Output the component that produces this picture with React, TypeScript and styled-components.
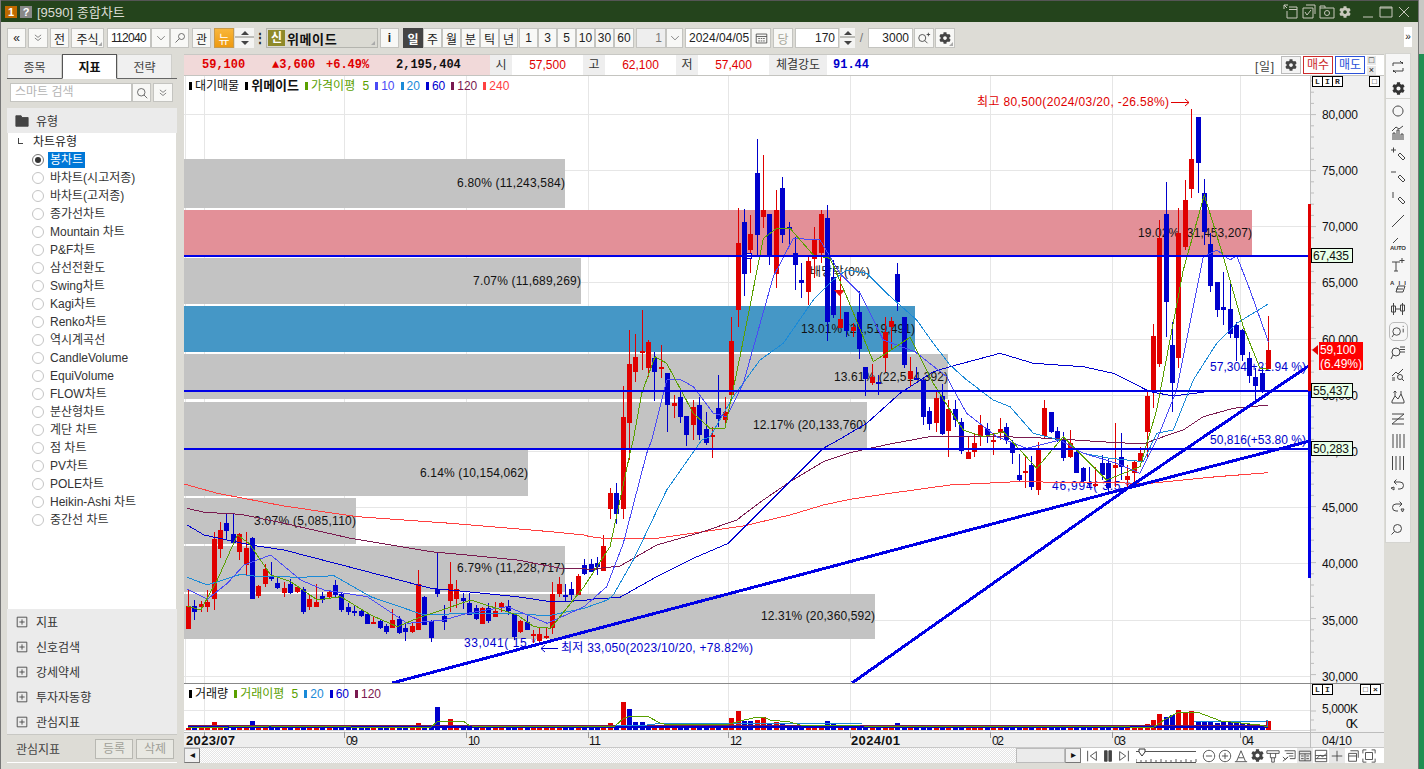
import * as React from 'react';
import styled, { createGlobalStyle } from 'styled-components';
import { FaCog } from 'react-icons/fa';

const KR = `"Liberation Sans", "Noto Sans CJK KR", sans-serif`;
const MONO = `"Liberation Mono", "Noto Sans CJK KR", monospace`;
const RED = '#e00000';
const BLUE = '#0000cc';

type Row = [number, number, number, number, number];

// candles read from the picture at 3x: up, wick top, body top, body bottom, wick bottom
const blockA: Row[] = [
	[1, 330, 378, 447, 447], [0, 360, 378, 395, 420], [1, 362, 373, 382, 395], [1, 330, 365, 382, 395],
	[1, 155, 178, 357, 390], [1, 125, 150, 207, 235], [0, 102, 130, 152, 178], [0, 103, 162, 190, 195],
	[1, 160, 162, 215, 240], [1, 155, 205, 255, 285], [0, 172, 175, 357, 357], [1, 315, 318, 347, 355],
	[1, 252, 267, 313, 322], [0, 247, 288, 296, 303], [0, 288, 310, 323, 328], [1, 305, 325, 340, 350],
	[0, 298, 312, 340, 343], [1, 318, 322, 337, 340], [0, 322, 328, 395, 402], [1, 343, 358, 382, 390],
	[1, 312, 366, 381, 382], [0, 335, 348, 360, 368], [1, 333, 335, 352, 358], [0, 300, 316, 345, 352],
	[0, 338, 343, 390, 395], [0, 370, 381, 397, 405], [0, 375, 393, 399, 408], [0, 390, 393, 408, 412],
	[0, 395, 403, 431, 433], [1, 410, 426, 430, 433], [0, 420, 423, 443, 447], [0, 432, 438, 456, 462],
	[1, 388, 420, 443, 445], [0, 408, 418, 458, 462], [0, 430, 443, 456, 482], [1, 430, 437, 456, 458],
	[1, 270, 313, 450, 450], [0, 348, 351, 435, 435], [0, 420, 423, 473, 485], [0, 215, 328, 342, 352],
	[0, 375, 407, 425, 450], [1, 247, 312, 363, 395], [1, 300, 327, 358, 385], [0, 338, 355, 362, 388],
	[0, 338, 368, 405, 405], [0, 375, 383, 417, 420], [1, 380, 385, 431, 432], [0, 368, 383, 423, 430],
	[1, 365, 393, 410, 410], [1, 365, 370, 380, 395], [0, 360, 378, 392, 405], [0, 400, 402, 472, 480],
	[1, 420, 423, 455, 460], [0, 402, 425, 450, 450], [1, 450, 462, 466, 490], [1, 445, 462, 482, 490],
	[1, 445, 468, 475, 478], [1, 305, 342, 445, 462], [1, 292, 312, 342, 350], [0, 312, 345, 350, 362],
	[0, 307, 327, 345, 360], [1, 282, 288, 344, 345], [0, 237, 255, 282, 285], [0, 237, 252, 275, 275],
	[0, 230, 250, 260, 285], [1, 165, 197, 272, 272], [1, 25, 38, 87, 117], [0, 10, 38, 103, 132],
];

const blockB: Row[] = [
	[1, 768, 860, 1137, 1167], [1, 600, 702, 878, 990], [1, 612, 682, 725, 755], [1, 540, 663, 665, 720],
	[1, 630, 636, 715, 740], [0, 665, 685, 725, 812], [1, 645, 711, 713, 745], [0, 728, 728, 825, 905],
	[1, 795, 818, 828, 865], [0, 780, 800, 860, 878], [0, 860, 858, 914, 948], [1, 810, 831, 885, 930],
	[0, 800, 825, 915, 930], [0, 845, 897, 940, 945], [1, 890, 915, 917, 985], [0, 735, 833, 867, 890],
	[1, 800, 845, 870, 880], [1, 560, 632, 795, 800], [1, 235, 338, 540, 590], [0, 237, 276, 432, 497],
	[1, 255, 312, 360, 430], [0, 27, 128, 315, 375], [1, 75, 240, 262, 295], [0, 252, 252, 378, 405],
	[1, 180, 240, 432, 475], [0, 140, 173, 315, 340], [0, 275, 292, 295, 345], [0, 320, 368, 405, 480],
	[0, 400, 450, 458, 505], [1, 378, 393, 487, 525], [1, 292, 330, 387, 445], [1, 240, 252, 368, 400],
	[0, 225, 263, 577, 633], [0, 390, 442, 556, 565], [1, 440, 567, 593, 595], [0, 545, 545, 603, 620],
	[1, 578, 590, 603, 620], [0, 482, 545, 657, 687], [0, 710, 710, 747, 797], [1, 702, 741, 758, 765],
	[0, 735, 755, 760, 795], [1, 560, 605, 684, 725], [1, 560, 573, 590, 660], [0, 400, 432, 515, 543],
	[0, 560, 560, 705, 715], [1, 680, 722, 747, 770], [0, 710, 744, 748, 750], [0, 745, 750, 860, 885],
	[0, 830, 843, 882, 900], [1, 785, 805, 878, 905], [0, 762, 798, 912, 915], [1, 810, 838, 903, 980],
	[0, 810, 838, 870, 890],
];

const blockC: Row[] = [
	[0, 985, 995, 1082, 1093], [1, 1040, 1087, 1107, 1107], [1, 1030, 1060, 1085, 1100], [1, 975, 1005, 1040, 1068],
	[0, 1000, 1018, 1035, 1060], [1, 1030, 1050, 1055, 1095], [1, 985, 1018, 1028, 1050], [0, 1000, 1012, 1050, 1062],
	[0, 1050, 1058, 1090, 1122], [0, 1092, 1155, 1170, 1175], [1, 1100, 1143, 1148, 1195], [0, 1097, 1125, 1190, 1200],
	[1, 1055, 1080, 1200, 1215], [1, 930, 953, 1037, 1048], [0, 965, 967, 1027, 1030], [0, 1010, 1022, 1050, 1055],
	[0, 1025, 1050, 1103, 1112], [1, 1020, 1060, 1102, 1105], [0, 1075, 1085, 1150, 1150], [0, 1130, 1133, 1172, 1180],
	[0, 1130, 1175, 1182, 1190], [1, 1130, 1182, 1186, 1190], [0, 1095, 1120, 1155, 1170], [0, 1105, 1120, 1195, 1205],
	[1, 1000, 1125, 1133, 1190], [0, 1030, 1102, 1130, 1170], [1, 1125, 1158, 1170, 1190], [1, 1110, 1115, 1148, 1180],
	[1, 1070, 1090, 1115, 1115], [1, 900, 918, 1025, 1100], [1, 702, 738, 905, 955], [1, 390, 443, 822, 830],
	[0, 275, 372, 635, 740], [0, 695, 765, 878, 965], [1, 355, 430, 803, 835], [1, 270, 330, 470, 480],
	[1, 57, 207, 297, 325], [0, 80, 82, 220, 310], [0, 268, 310, 425, 465], [0, 430, 463, 587, 605],
	[0, 575, 576, 660, 680], [0, 545, 651, 659, 705], [0, 573, 657, 732, 745], [0, 695, 705, 743, 812],
	[0, 718, 720, 795, 812], [0, 785, 805, 857, 880], [0, 835, 860, 887, 930], [0, 830, 850, 905, 910],
	[1, 678, 780, 838, 838],
];

const fromZoom = (oy: number, rows: Row[]) =>
	rows.map(([up, wt, bt, bb, wb]) => ({
		up: up === 1,
		wt: Math.round(oy + wt / 3),
		bt: Math.round(oy + bt / 3),
		bb: Math.round(oy + bb / 3),
		wb: Math.round(oy + wb / 3)
	}));

const candles = [...fromZoom(480, blockA), ...fromZoom(130, blockB), ...fromZoom(90, blockC)];
const candleX = (i: number) => Math.round(188 + i * 6.39);

type Pt = [number, number];
const zoomed = (ox: number, oy: number, p: Pt[]) => p.map(([x, y]) => `${(ox + x / 3).toFixed(1)},${(oy + y / 3).toFixed(1)}`).join(' ');
const Z7 = (p: Pt[]) => zoomed(184, 480, p);
const Z8 = (p: Pt[]) => zoomed(600, 130, p);
const Z9 = (p: Pt[]) => zoomed(950, 90, p);
const Z10 = (p: Pt[]) => zoomed(590, 440, p);

const lines = [
	{
		color: '#ff4040',
		points: [
			Z7([[0, 12], [100, 40], [300, 78], [520, 110], [800, 130], [1100, 155], [1200, 165]]),
			Z10([[0, 290], [50, 296], [200, 295], [340, 275], [460, 258], [600, 225], [700, 195], [780, 178], [900, 160]]),
			Z9([[0, 1185], [200, 1175], [600, 1180], [800, 1160], [955, 1148]])
		]
	},
	{
		color: '#7a1a50',
		points: [
			Z7([[10, 85], [60, 97], [170, 103], [300, 130], [500, 175], [740, 215], [850, 225], [1000, 240], [1130, 265], [1240, 268]]),
			Z10([[0, 388], [90, 378], [200, 315], [340, 275], [440, 240], [520, 180], [600, 125], [700, 65], [780, 38], [900, 12]]),
			Z8([[1000, 918]]),
			Z9([[0, 1038], [100, 1038], [300, 1045], [450, 1055], [580, 1062], [640, 1040], [700, 1020], [760, 980], [850, 955], [955, 945]])
		]
	},
	{
		color: '#0000d0',
		points: [
			Z7([[10, 135], [60, 165], [200, 195], [300, 210], [500, 262], [740, 325], [850, 335], [1000, 350], [1100, 365], [1200, 362]]),
			Z10([[0, 478], [90, 472], [200, 410], [310, 355], [415, 310], [480, 245], [600, 125], [700, 25], [745, 0]]),
			Z8([[800, 880], [900, 790], [1000, 725]]),
			Z9([[0, 830], [150, 790], [250, 820], [400, 830], [490, 850], [600, 905], [670, 918], [770, 905]])
		]
	},
	{
		color: '#1a8ad8',
		points: [
			Z7([[10, 292], [70, 315], [170, 283], [210, 288], [350, 292], [450, 287], [560, 350], [720, 405], [850, 400], [1000, 400], [1090, 408], [1200, 385], [1270, 360]]),
			Z10([[70, 465], [130, 360], [230, 150], [335, 0]]),
			Z8([[330, 920], [400, 800], [480, 690], [550, 640], [640, 510], [700, 450], [740, 420], [800, 430], [860, 490], [950, 570], [1000, 640]]),
			Z9([[0, 825], [50, 870], [130, 930], [180, 950], [250, 1030], [330, 1050], [400, 1090], [480, 1105], [580, 1115], [620, 1030], [670, 1020], [730, 870], [800, 760], [860, 700], [955, 642]])
		]
	},
	{
		color: '#4a4af5',
		points: [
			Z7([[10, 328], [70, 358], [130, 310], [180, 255], [260, 225], [350, 300], [420, 330], [550, 350], [670, 430], [780, 420], [850, 400], [970, 380], [1090, 430], [1200, 380]]),
			Z10([[50, 440], [100, 310], [170, 40], [185, 0]]),
			Z8([[200, 750], [240, 748], [280, 770], [340, 850], [380, 860], [430, 760], [520, 440], [580, 325], [660, 330], [720, 430], [780, 490], [850, 630], [945, 665], [1040, 740]]),
			Z9([[0, 880], [50, 970], [140, 1040], [230, 1075], [330, 1050], [400, 1090], [500, 1120], [570, 1150], [620, 1050], [680, 900], [760, 500], [800, 480], [840, 510], [860, 497], [900, 600], [955, 755]])
		]
	},
	{
		color: '#5aa000',
		points: [
			Z7([[10, 378], [50, 390], [100, 300], [160, 165], [195, 190], [260, 285], [320, 305], [400, 360], [470, 350], [560, 405], [640, 440], [700, 415], [760, 395], [860, 360], [1000, 405], [1050, 440], [1100, 445], [1200, 320]]),
			Z10([[60, 320], [120, 40], [130, 0]]),
			Z8([[125, 790], [165, 680], [200, 700], [280, 850], [330, 895], [375, 895], [420, 680], [490, 325], [530, 295], [570, 295], [640, 375], [690, 385], [740, 500], [820, 695], [930, 622], [1000, 760]]),
			Z9([[0, 960], [40, 1020], [100, 1040], [160, 1025], [260, 1135], [340, 1040], [400, 1100], [470, 1170], [570, 1130], [620, 960], [700, 540], [763, 315], [820, 500], [880, 710], [930, 835], [955, 838]])
		]
	}
];

const zones = [
	{ y: 159, h: 49, x2: 565, fill: '#c3c3c3', text: '6.80% (11,243,584)', ty: 187 },
	{ y: 210, h: 45, x2: 1252, fill: '#e39098', text: '19.02% (31,453,207)', ty: 237 },
	{ y: 258, h: 46, x2: 581, fill: '#c3c3c3', text: '7.07% (11,689,269)', ty: 285 },
	{ y: 306, h: 46, x2: 915, fill: '#4597c6', text: '13.01% (21,519,491)', ty: 333 },
	{ y: 354, h: 45, x2: 948, fill: '#c3c3c3', text: '13.61% (22,514,392)', ty: 381 },
	{ y: 402, h: 46, x2: 867, fill: '#c3c3c3', text: '12.17% (20,133,760)', ty: 429 },
	{ y: 450, h: 46, x2: 528, fill: '#c3c3c3', text: '6.14% (10,154,062)', ty: 477 },
	{ y: 498, h: 46, x2: 356, fill: '#c3c3c3', text: '3.07% (5,085,110)', ty: 525 },
	{ y: 546, h: 46, x2: 565, fill: '#c3c3c3', text: '6.79% (11,228,717)', ty: 572 },
	{ y: 594, h: 45, x2: 875, fill: '#c3c3c3', text: '12.31% (20,360,592)', ty: 620 }
];

const months = [204, 344, 466, 588, 728, 850, 990, 1112, 1240];
const prices = [
	{ y: 114, label: '80,000' }, { y: 170, label: '75,000' }, { y: 226, label: '70,000' }, { y: 282, label: '65,000' },
	{ y: 339, label: '60,000' }, { y: 395, label: '55,000' }, { y: 451, label: '50,000' }, { y: 507, label: '45,000' },
	{ y: 563, label: '40,000' }, { y: 620, label: '35,000' }, { y: 676, label: '30,000' }
];

const widthOf = (s: string) => [...s].reduce((a, c) => a + (c.charCodeAt(0) > 255 ? 12 : 6), 0);

// every label in the chart keeps the fixed cell width of the original grid font
const Label = (p: { x: number; y: number; s: string; end?: boolean; color?: string; bold?: boolean }) => {
	const w = p.bold ? p.s.length * 7 : widthOf(p.s);
	return (
		<ChartText
			x={p.end ? p.x - w : p.x}
			y={p.y}
			textLength={w}
			fill={p.color || '#111'}
			fontWeight={p.bold ? 700 : 400}
			fontSize={p.bold ? 13 : 12}
		>
			{p.s}
		</ChartText>
	);
};

const Tag = (p: { y: number; s: string }) => (
	<>
		<rect x={1311.5} y={p.y - 7.5} width={41} height={14} fill="#e8ffe8" stroke="#000" />
		<Label x={1313} y={p.y + 4} s={p.s} />
	</>
);

const MainChart = () => (
	<ChartSvg viewBox="184 76 1200 607" width={1200} height={607}>
		<rect x={1310} y={76} width={74} height={607} fill="#f0f0f0" />
		<line x1={1310.5} y1={76} x2={1310.5} y2={683} stroke="#bdbdbd" />
		{prices.map(p => (
			<line key={p.y} x1={184} y1={p.y + 0.5} x2={1310} y2={p.y + 0.5} stroke="#e6e6e6" />
		))}
		{months.map(m => (
			<line key={m} x1={m + 0.5} y1={76} x2={m + 0.5} y2={683} stroke="#e6e6e6" />
		))}
		<line x1={185.5} y1={76} x2={185.5} y2={683} stroke="#e6e6e6" />
		{zones.map(z => (
			<rect key={z.y} x={184} y={z.y} width={z.x2 - 184} height={z.h} fill={z.fill} />
		))}
		{zones.map(z => (
			<Label key={z.text} x={z.x2} y={z.ty} s={z.text} end />
		))}
		<Label x={810} y={276} s="배당락(0%)" />
		<Label x={464} y={647} s="33,041( 15 *" color={BLUE} />
		<Label x={1052} y={490} s="46,994( 3.5 *" color={BLUE} />
		<Label x={1210} y={371} s="57,304 +21.94 %)" color={BLUE} />
		<Label x={1210} y={444} s="50,816(+53.80 %)" color={BLUE} />

		{candles.map((c, i) => {
			const x = candleX(i);
			const color = c.up ? RED : BLUE;
			return (
				<g key={i} fill={color}>
					<rect x={x} y={c.wt} width={1} height={c.wb - c.wt} />
					<rect x={x - 2} y={c.bt} width={5} height={Math.max(c.bb - c.bt, 2)} />
				</g>
			);
		})}
		<rect x={746.5} y={253.5} width={5} height={5} fill="#fff" stroke={BLUE} />
		<polygon points="834,290 845,290 839.5,296" fill="#f01010" />

		{lines.map(l => (
			<polyline key={l.color} points={l.points.join(' ')} fill="none" stroke={l.color} strokeWidth={1} shapeRendering="crispEdges" />
		))}

		<g stroke="#0000e6" fill="none" shapeRendering="crispEdges">
			<line x1={184} y1={256} x2={1309} y2={256} strokeWidth={2} />
			<line x1={184} y1={391} x2={1309} y2={391} strokeWidth={2} />
			<line x1={184} y1={449} x2={1309} y2={449} strokeWidth={2} />
			<line x1={392} y1={683} x2={1128} y2={488} strokeWidth={3} />
			<line x1={1128} y1={488} x2={1310} y2={441} strokeWidth={3} />
			<line x1={852} y1={683} x2={1128} y2={488} strokeWidth={3} />
			<line x1={1128} y1={488} x2={1310} y2={365} strokeWidth={3} />
		</g>

		<Label x={977} y={106} s="최고 80,500(2024/03/20, -26.58%)" color={RED} />
		<path d="M1171 102.5h18M1185 99l4 3.5-4 3.5" fill="none" stroke={RED} />
		<Label x={561} y={652} s="최저 33,050(2023/10/20, +78.82%)" color={BLUE} />
		<path d="M558 648.5h-17M545 645l-4 3.5 4 3.5" fill="none" stroke={BLUE} />

		<rect x={1308} y={204} width={3} height={187} fill={RED} />
		<rect x={1308} y={391} width={3} height={187} fill="#0000e6" />

		{Array.from({ length: 55 }, (_, i) => 81 + i * 11.2).map((y, i) => (
			<line key={y} x1={1311} y1={y} x2={i % 5 === 3 ? 1316 : 1314} y2={y} stroke="#bdbdbd" />
		))}
		{prices.map(p => (
			<Label key={p.label} x={1322} y={p.y + 5} s={p.label} />
		))}
		<Tag y={256} s="67,435" />
		<Tag y={391} s="55,437" />
		<Tag y={449} s="50,283" />
		<rect x={1319} y={342} width={44} height={28} fill="#ff0000" />
		<polygon points="1312,350 1318,345 1318,355" fill="#e00000" />
		<Label x={1320} y={354} s="59,100" color="#fff" />
		<Label x={1320} y={368} s="(6.49%)" color="#fff" />
	</ChartSvg>
);

const volumeHeights: Record<number, number> = {
	4: 8, 10: 9, 36: 7, 39: 23, 41: 11, 66: 7, 68: 28, 69: 21, 70: 8, 71: 8, 72: 4, 73: 5, 75: 7, 83: 7, 85: 12, 86: 19, 87: 9,
	88: 9, 89: 10, 90: 13, 91: 6, 92: 8, 93: 6, 95: 5, 100: 9, 101: 7, 111: 7, 150: 6, 151: 10, 152: 16, 153: 13, 154: 15,
	155: 20, 156: 17, 157: 19, 158: 9, 159: 9, 160: 8, 161: 7, 162: 8, 163: 8, 164: 7, 165: 7, 166: 6, 167: 6, 168: 5, 169: 9
};

// volume bars compare with the day before, so a few differ from their candle colour
const volumeUp: Record<number, boolean> = {
	69: false, 70: false, 71: false, 72: false, 73: true, 75: true, 85: true, 86: true, 87: false, 88: false, 89: true, 90: true,
	91: false, 92: true, 93: false
};

const VolumeChart = () => (
	<ChartSvg viewBox="184 684 1200 48" width={1200} height={48}>
		<rect x={1310} y={684} width={74} height={48} fill="#f0f0f0" />
		<line x1={1310.5} y1={684} x2={1310.5} y2={732} stroke="#bdbdbd" />
		{months.map(m => (
			<line key={m} x1={m + 0.5} y1={684} x2={m + 0.5} y2={732} stroke="#e6e6e6" />
		))}
		<line x1={184} y1={710.5} x2={1310} y2={710.5} stroke="#e6e6e6" />
		<line x1={184} y1={730.5} x2={1310} y2={730.5} stroke="#d8d8d8" />
		{candles.map((c, i) => {
			const h = volumeHeights[i] || 2 + ((i * 7) % 3);
			const up = i in volumeUp ? volumeUp[i] : c.up;
			return <rect key={i} x={candleX(i) - 2} y={730 - h} width={5} height={h} fill={up ? RED : BLUE} />;
		})}
		<polyline points="188,727 1268,727" fill="none" stroke="#0000d0" strokeWidth={2} shapeRendering="crispEdges" />
		<polyline points="188,726 1268,725" fill="none" stroke="#7a1a50" shapeRendering="crispEdges" />
		<polyline points="615,725 647,725 663,723 862,723" fill="none" stroke="#1a8ad8" shapeRendering="crispEdges" />
		<polyline points="1194,722 1267,721 1267,727" fill="none" stroke="#1a8ad8" shapeRendering="crispEdges" />
		<polyline
			points="188,728 270,726 430,728 437,722 463,721 470,726 600,727 615,726 623,719 630,716 647,716 660,723 668,725 730,724 740,721 753,718 763,717 770,720 790,722 800,725 860,726 1130,727 1154,727 1164,720 1177,713 1197,712 1221,721 1260,725 1268,727"
			fill="none"
			stroke="#5aa000"
			shapeRendering="crispEdges"
		/>
		<line x1={1311} y1={711} x2={1316} y2={711} stroke="#bdbdbd" />
		<line x1={1311} y1={720} x2={1314} y2={720} stroke="#bdbdbd" />
		<line x1={1311} y1={730} x2={1316} y2={730} stroke="#bdbdbd" />
		<Label x={1322} y={713} s="5,000K" />
		<Label x={1358} y={728} s="0K" end />
	</ChartSvg>
);

const xLabels = [
	{ x: 186, s: '2023/07', bold: true }, { x: 346, s: '09' }, { x: 468, s: '10' }, { x: 589, s: '11' }, { x: 730, s: '12' },
	{ x: 851, s: '2024/01', bold: true }, { x: 992, s: '02' }, { x: 1114, s: '03' }, { x: 1242, s: '04' }, { x: 1322, s: '04/10' }
];

const XAxis = () => (
	<ChartSvg viewBox="184 732 1200 16" width={1200} height={16}>
		<rect x={184} y={732} width={1200} height={16} fill="#eeeeee" />
		<line x1={184} y1={732.5} x2={1384} y2={732.5} stroke="#bdbdbd" />
		<line x1={184} y1={747.5} x2={1384} y2={747.5} stroke="#c8c8c8" />
		<line x1={1310.5} y1={732} x2={1310.5} y2={748} stroke="#bdbdbd" />
		{months.map(m => (
			<line key={m} x1={m + 0.5} y1={732} x2={m + 0.5} y2={738} stroke="#999" />
		))}
		{xLabels.map(l => (
			<Label key={l.s} x={l.x} y={745} s={l.s} bold={l.bold} />
		))}
	</ChartSvg>
);

const Ic = (p: { d: string; size?: number; fill?: string; color?: string; note?: string; noteY?: number }) => (
	<svg width={p.size || 16} height={p.size || 16} viewBox="0 0 16 16" fill={p.fill || 'none'} stroke={p.color || '#444'} strokeWidth={1}>
		<path d={p.d} />
		{p.note && (
			<IconNote x={0} y={p.noteY} textLength={16}>
				{p.note}
			</IconNote>
		)}
	</svg>
);

const pencil = 'M8 8l2-2 5 5-2 2zM10 10l-2-2';
const loupe = 'M7.5 7.5m-4 0a4 4 0 1 0 8 0a4 4 0 1 0-8 0M4.5 10.5L1.5 13.5';
const sideIcons: { d: string; note?: string; noteY?: number }[] = [
	{ d: 'M3 7V4h9l-2-2M12 3l1 1-1 1M13 9v3H4l2 2M4 11l-1 1 1 1' },
	{ d: 'gear' },
	{ d: 'M8 3a5 5 0 1 0 .01 0' },
	{ d: 'M2 14h12M3 13V8h2v5M7 13V5h2v8M11 13V9h2v4M2 6l4-4 3 2 4-3' },
	{ d: `M1 3h5M3.5 .5v5${pencil}` },
	{ d: `M1 3h5${pencil}` },
	{ d: `M3 1v6${pencil}` },
	{ d: 'M2 14L14 2' },
	{ d: 'M3 8L8 3', note: 'AUTO', noteY: 15 },
	{ d: 'M2 5h8M6 5v9M4 14h4M12 1v5M9.5 3.5h5' },
	{ d: 'M12 7l3 0-2 6H6l2-6zM6 10h7', note: 'All', noteY: 6 },
	{ d: 'M3.5 2v12M12.5 2v12M1.5 5h4v6h-4zM10.5 4h4v6h-4zM6 8h4' },
	{ d: 'i' },
	{ d: 'M6 7m-4 0a4 4 0 1 0 8 0a4 4 0 1 0-8 0M3 10L1 14M10 2h5M10 4.5h5M10 7h5' },
	{ d: 'M2 9l4-4 2 2 5-5M2 11h3M2 13h3M10 10m-2.5 0a2.5 2.5 0 1 0 5 0a2.5 2.5 0 1 0-5 0M12 12l2 2' },
	{ d: 'M2 12l3-5 3 3 3-5 3 7v2H2zM5 2v5M3.5 3.5L5 2l1.5 1.5M11 2v3' },
	{ d: 'M2 3h12M14 3L2 13M2 8h12M2 13h12' },
	{ d: 'M3 1v14M7 1v14M10 1v14M14 1v14' },
	{ d: 'M2.5 1v14M6 1v14M10 1v14M13.5 1v14' },
	{ d: 'M4 5h6a3.5 3.5 0 0 1 0 7H8M4 5l2.5-2.5M4 5l2.5 2.5M1 11l3-1v3z' },
	{ d: 'M12 5H6a3.5 3.5 0 0 0 0 7h2M12 5L9.5 2.5M12 5L9.5 7.5M11 10l3 0-1.5 3z' },
	{ d: loupe }
];

const controls = [
	'M3 2v12M13 3L6 8l7 5z',
	'pause',
	'M13 2v12M3 3l7 5-7 5z',
	'slider',
	'M8 1.5a6.5 6.5 0 1 0 .01 0M4.5 8h7',
	'M8 1.5a6.5 6.5 0 1 0 .01 0M4.5 8h7M8 4.5v7',
	'M3 14L8 2l5 12M5 10h6M1 14.5h14',
	'gear',
	'M1 2h14v3H1zM5 5v5h6V5M6.5 10v5h3v-5',
	'M3 2h12v9H9M5 5h8M8 8h5M1 9l3 3 3-3M1 14l6-5',
	'M1.5 2.5h13v11h-13zM1.5 5.5h13M8 5.5v8M3.5 8h3M3.5 11h3M9.5 8h3M9.5 11h3',
	'M1.5 1.5h13v13h-13zM1.5 7.5h13M1.5 11h13M3 11l4-4 3 2 4-4',
	'M8 2v12M2 8h12',
	'M5 2h9v8M3 5h9v9H3zM3 8h9',
	'M1 5V1h4M11 1h4v4M15 11v4h-4M5 15H1v-4M4 4h8v8H4z'
];

const chartTypes = [
	'봉차트', '바차트(시고저종)', '바차트(고저종)', '종가선차트', 'Mountain 차트', 'P&F차트', '삼선전환도', 'Swing차트', 'Kagi차트',
	'Renko차트', '역시계곡선', 'CandleVolume', 'EquiVolume', 'FLOW차트', '분산형차트', '계단 차트', '점 차트', 'PV차트', 'POLE차트',
	'Heikin-Ashi 차트', '중간선 차트'
];

const App = () => {
	return (
		<>
			<GlobalStyle />
			<Frame>
				<Window>
					<TitleBar>
						<TitleBadge $bg="#c06a00">1</TitleBadge>
						<TitleBadge $bg="#888888">?</TitleBadge>
						<TitleText>[9590] 종합차트</TitleText>
						<TitleIcons>
							<Ic color="#c8c8bc" d="M1 1l3 3M1 5V1h4M6 3h8v11H4V7M6 5.5h8" />
							<Ic color="#c8c8bc" d="M5 1h9v9M2 4h10v10H2zM4 8l2 3 4-5" />
							<Ic color="#c8c8bc" d="M1 4h14v10H1zM1 4V2h5v2M8 9m-2.5 0a2.5 2.5 0 1 0 5 0a2.5 2.5 0 1 0-5 0" />
							<TitleGear><FaCog size={12} color="#c8c8bc" /></TitleGear>
							<WinButtons>
								<Ic color="#c8c8bc" d="M3 13h10" />
								<Ic color="#c8c8bc" d="M2 3h12v10H2zM2 4h12" />
								<Ic color="#c8c8bc" d="M3 3l10 10M13 3L3 13" />
							</WinButtons>
						</TitleIcons>
					</TitleBar>

					<Toolbar>
						<Btn $w={19}>«</Btn>
						<Btn $w={20} $ml={2}><Ic size={10} d="M3 3l5 4 5-4M3 8l5 4 5-4" /></Btn>
						<Btn $w={19} $ml={2}>전</Btn>
						<Btn $w={33} $ml={2} $corner>주식</Btn>
						<InputBox $w={44} $ml={3} $align="left" $tight>112040</InputBox>
						<Btn $w={19}><Ic size={10} d="M2 5l6 6 6-6" /></Btn>
						<Btn $w={19}><Ic size={12} d="M10 6m-4 0a4 4 0 1 0 8 0a4 4 0 1 0-8 0M7 9l-5 5" /></Btn>
						<Btn $w={19} $ml={3}>관</Btn>
						<OrangeBtn>뉴</OrangeBtn>
						<SpinBox $w={19} $ml={1} />
						<DotsBtn>⋮</DotsBtn>
						<StockBox>
							<NewBadge>신</NewBadge>
							<StockName>위메이드</StockName>
						</StockBox>
						<Btn $w={19} $ml={2} $bold>i</Btn>
						<Btn $w={20} $ml={4} $dark>일</Btn>
						{['주', '월', '분', '틱', '년'].map(t => (
							<Btn key={t} $w={19}>{t}</Btn>
						))}
						<Btn $w={19} $ml={1}>1</Btn>
						{['3', '5', '10', '30'].map(t => (
							<Btn key={t} $w={19}>{t}</Btn>
						))}
						<Btn $w={20}>60</Btn>
						<InputBox $w={30} $ml={2} $muted>1</InputBox>
						<Btn $w={17}><Ic size={10} d="M2 5l6 6 6-6" /></Btn>
						<InputBox $w={66} $ml={2} $align="left">2024/04/05</InputBox>
						<Btn $w={20}><Ic size={13} d="M1.5 2.5h13v11h-13zM1.5 5.5h13M4 8h2M7 8h2M10 8h2M4 11h2M7 11h2M10 11h2" /></Btn>
						<Btn $w={20} $ml={2} $faded>당</Btn>
						<InputBox $w={44} $ml={2}>170</InputBox>
						<SpinBox $w={15} $ml={1} />
						<SlashMark>/</SlashMark>
						<InputBox $w={45}>3000</InputBox>
						<Btn $w={20} $ml={1}><Ic size={14} d="M6 8m-4 0a4 4 0 1 0 8 0a4 4 0 1 0-8 0M9 11l3 3M11 4h4M13 2v4" /></Btn>
						<Btn $w={20} $ml={1} $corner><FaCog size={12} color="#444" /></Btn>
						<MoreTab>»</MoreTab>
					</Toolbar>

					<MainRow>
						<Sidebar>
							<Tabs>
								<Tab>종목</Tab>
								<Tab $active>지표</Tab>
								<Tab>전략</Tab>
							</Tabs>
							<SearchRow>
								<SearchInput>스마트 검색</SearchInput>
								<Btn $w={19}><Ic size={12} d="M7 7m-5 0a5 5 0 1 0 10 0a5 5 0 1 0-10 0M10.5 10.5L15 15" /></Btn>
								<Btn $w={20} $ml={2}><Ic size={10} d="M3 3l5 4 5-4M3 8l5 4 5-4" /></Btn>
							</SearchRow>
							<SectionHead>
								<Ic fill="#444" size={14} d="M1 2h6l1 2h7v10H1zM4 8.5h8" />
								<span>유형</span>
							</SectionHead>
							<TreeList>
								<TreeRoot>차트유형</TreeRoot>
								{chartTypes.map((t, i) => (
									<TreeRow key={t}>
										<Radio $on={i === 0} />
										<TreeLabel $on={i === 0}>{t}</TreeLabel>
									</TreeRow>
								))}
							</TreeList>
							<Accordion>
								{['지표', '신호검색', '강세약세', '투자자동향', '관심지표'].map(t => (
									<SectionHead key={t}>
										<Ic size={14} d="M2.5 2.5h11v11h-11zM8 5v6M5 8h6" />
										<span>{t}</span>
									</SectionHead>
								))}
							</Accordion>
							<SideFoot>
								<FootLabel>관심지표</FootLabel>
								<FootBtn>등록</FootBtn>
								<FootBtn>삭제</FootBtn>
							</SideFoot>
						</Sidebar>

						<ChartColumn>
							<InfoRow>
								<PriceStrip>
									<Val $w={72} $color={RED} $pad={18}>59,100</Val>
									<Val $w={70} $color={RED} $pad={16}>▲3,600</Val>
									<Val $w={55} $color={RED} $pad={0}>+6.49%</Val>
									<Val $w={109} $color="#111" $pad={15}>2,195,404</Val>
								</PriceStrip>
								<InfoKey $w={22}>시</InfoKey>
								<InfoVal $w={71}>57,500</InfoVal>
								<InfoKey $w={22}>고</InfoKey>
								<InfoVal $w={71}>62,100</InfoVal>
								<InfoKey $w={22}>저</InfoKey>
								<InfoVal $w={71}>57,400</InfoVal>
								<InfoKey $w={58}>체결강도</InfoKey>
								<Val $w={80} $color={BLUE} $pad={6}>91.44</Val>
								<InfoRight>
									<PeriodText>[일]</PeriodText>
									<GearBox><FaCog size={12} color="#444" /></GearBox>
									<TradeBtn $color="#cc2a2a">매수</TradeBtn>
									<TradeBtn $color="#2a50d8">매도</TradeBtn>
									<MiniStack>
										<MiniBtn>□</MiniBtn>
										<MiniBtn>×</MiniBtn>
									</MiniStack>
								</InfoRight>
							</InfoRow>

							<ChartPane>
								<MainChart />
								<Legend>
									<LegendItem $mark="#000">대기매물</LegendItem>
									<LegendItem $mark="#000" $bold>위메이드</LegendItem>
									<LegendItem $mark="#5aa000" $color="#5aa000">가격이평 5</LegendItem>
									<LegendItem $mark="#4a4af5" $color="#4a4af5">10</LegendItem>
									<LegendItem $mark="#1a8ad8" $color="#1a8ad8">20</LegendItem>
									<LegendItem $mark="#0000d0" $color="#0000d0">60</LegendItem>
									<LegendItem $mark="#7a1a50" $color="#7a1a50">120</LegendItem>
									<LegendItem $mark="#ff4040" $color="#ff4040">240</LegendItem>
								</Legend>
								<PaneKeys>
									<PaneKey>L</PaneKey>
									<PaneKey>I</PaneKey>
									<PaneKey>R</PaneKey>
									<PaneGap />
									<PaneKey>□</PaneKey>
								</PaneKeys>
							</ChartPane>

							<ChartPane $divider>
								<VolumeChart />
								<Legend>
									<LegendItem $mark="#000">거래량</LegendItem>
									<LegendItem $mark="#5aa000" $color="#5aa000">거래이평 5</LegendItem>
									<LegendItem $mark="#1a8ad8" $color="#1a8ad8">20</LegendItem>
									<LegendItem $mark="#0000d0" $color="#0000d0">60</LegendItem>
									<LegendItem $mark="#7a1a50" $color="#7a1a50">120</LegendItem>
								</Legend>
								<PaneKeys>
									<PaneKey>L</PaneKey>
									<PaneKey>I</PaneKey>
									<PaneGap $wide />
									<PaneKey>□</PaneKey>
									<PaneKey>×</PaneKey>
								</PaneKeys>
							</ChartPane>

							<XAxis />

							<ControlBar>
								<ScrollBtn>◂</ScrollBtn>
								<ScrollTrack />
								<ScrollThumb />
								<ScrollBtn>▸</ScrollBtn>
								<PlayRow>
									{controls.map((d, i) => {
										if (d === 'gear') {
											return <CtrlBtn key={i}><FaCog size={13} color="#444" /></CtrlBtn>;
										}
										if (d === 'pause') {
											return <CtrlBtn key={i}><Ic fill="#444" size={14} d="M4 2h3v12H4zM9 2h3v12H9z" /></CtrlBtn>;
										}
										if (d === 'slider') {
											return (
												<SliderBox key={i}>
													<svg width={62} height={15} viewBox="0 0 62 15">
														<path d="M0 3.5h60M0 14.5h60M0 11v3M5 12v3M10 12v3M15 11v3M20 12v3M25 11v3M30 12v3M35 12v3M40 11v3M45 12v3M50 11v3M55 12v3M60 11v3" stroke="#555" fill="none" />
														<path d="M3 1h6v3l-3 4-3-4z" fill="#fff" stroke="#333" />
													</svg>
												</SliderBox>
											);
										}
										return <CtrlBtn key={i} $on={i === 10 || i === 12}><Ic d={d} size={14} /></CtrlBtn>;
									})}
								</PlayRow>
							</ControlBar>
						</ChartColumn>

						<SideTools>
							{sideIcons.map((t, i) => {
								if (t.d === 'gear') {
									return <ToolBtn key={i} $rule><FaCog size={13} color="#333" /></ToolBtn>;
								}
								if (t.d === 'i') {
									return (
										<ToolBtn key={i} $boxed>
											<Ic size={15} d="M6 8m-4 0a4 4 0 1 0 8 0a4 4 0 1 0-8 0M3 11l-2 3M13 2v1M13 5v4" />
										</ToolBtn>
									);
								}
								return <ToolBtn key={i}><Ic d={t.d} note={t.note} noteY={t.noteY} /></ToolBtn>;
							})}
						</SideTools>
					</MainRow>
				</Window>
				<EdgeStrip />
			</Frame>
		</>
	);
};

export default App;

const GlobalStyle = createGlobalStyle`
	html, body {
		margin: 0;
		padding: 0;
		overflow: hidden;
		background: #dddcd6;
	}
`;

const Frame = styled.div`
	display: flex;
	width: 1424px;
	height: 769px;
	font-family: ${KR};
	font-size: 12px;
	color: #222;
`;

const Window = styled.div`
	width: 1419px;
	height: 769px;
	flex-shrink: 0;
	background: #dddcd6;
	border-right: 1px solid #777;
	border-left: 1px solid #777;
	box-sizing: border-box;
`;

const EdgeStrip = styled.div`
	flex: 1;
	background: linear-gradient(#c8c8c4 0 54px, #1f8f52 54px);
`;

const TitleBar = styled.div`
	height: 22px;
	box-sizing: border-box;
	background: #24441c;
	border-top: 1px solid #555;
	display: flex;
	align-items: center;
	padding-left: 4px;
	gap: 3px;
`;

const TitleBadge = styled.div<{ $bg: string }>`
	width: 12px;
	height: 12px;
	background: ${p => p.$bg};
	color: #fff;
	font-weight: 700;
	font-size: 11px;
	line-height: 12px;
	text-align: center;
`;

const TitleText = styled.div`
	color: #dcdcd4;
	font-size: 13px;
	margin-left: 2px;
`;

const TitleIcons = styled.div`
	margin-left: auto;
	display: flex;
	align-items: center;
	gap: 2px;
	padding-right: 6px;
`;

const TitleGear = styled.div`
	width: 16px;
	display: flex;
	justify-content: center;
`;

const WinButtons = styled.div`
	display: flex;
	gap: 2px;
	margin-left: 5px;
`;

const Toolbar = styled.div`
	position: relative;
	height: 32px;
	box-sizing: border-box;
	padding: 6px 0 6px 6px;
	display: flex;
	align-items: stretch;
`;

const Btn = styled.div<{
	$w: number;
	$ml?: number;
	$corner?: boolean;
	$dark?: boolean;
	$faded?: boolean;
	$bold?: boolean;
}>`
	position: relative;
	width: ${p => p.$w}px;
	margin-left: ${p => p.$ml || 0}px;
	box-sizing: border-box;
	border: 1px solid ${p => (p.$dark ? '#444' : '#c4c4c0')};
	background: ${p => (p.$dark ? '#444' : '#f8f8f6')};
	color: ${p => (p.$dark ? '#fff' : p.$faded ? '#a8a89c' : '#222')};
	font-size: 12px;
	font-weight: ${p => (p.$bold || p.$dark ? 700 : 400)};
	display: flex;
	align-items: center;
	justify-content: center;
	flex-shrink: 0;
	&::after {
		content: '';
		display: ${p => (p.$corner ? 'block' : 'none')};
		position: absolute;
		right: 1px;
		bottom: 1px;
		border-left: 4px solid transparent;
		border-bottom: 4px solid #aaa;
	}
`;

const InputBox = styled.div<{ $w: number; $ml?: number; $align?: string; $muted?: boolean; $tight?: boolean }>`
	width: ${p => p.$w}px;
	margin-left: ${p => p.$ml || 0}px;
	box-sizing: border-box;
	flex-shrink: 0;
	border: 1px solid #c4c4c0;
	background: ${p => (p.$muted ? '#eeeeee' : '#fff')};
	color: ${p => (p.$muted ? '#777' : '#222')};
	line-height: 18px;
	padding: 0 3px;
	text-align: ${p => p.$align || 'right'};
	letter-spacing: ${p => (p.$tight ? '-0.7px' : 'normal')};
	white-space: nowrap;
	overflow: hidden;
`;

const OrangeBtn = styled.div`
	width: 20px;
	margin-left: 3px;
	box-sizing: border-box;
	background: linear-gradient(#f8b63a, #ee9a10);
	border: 1px solid #c99a48;
	color: #fff;
	display: flex;
	align-items: center;
	justify-content: center;
`;

const SpinBox = styled.div<{ $w: number; $ml?: number }>`
	position: relative;
	width: ${p => p.$w}px;
	margin-left: ${p => p.$ml || 0}px;
	background: linear-gradient(#f4f4f2 0 8px, #bdbdb8 8px 10px, #f4f4f2 10px);
	flex-shrink: 0;
	&::before,
	&::after {
		content: '';
		position: absolute;
		left: 50%;
		margin-left: -4px;
		border-left: 4px solid transparent;
		border-right: 4px solid transparent;
	}
	&::before {
		top: 3px;
		border-bottom: 4px solid #444;
	}
	&::after {
		bottom: 3px;
		border-top: 4px solid #444;
	}
`;

const DotsBtn = styled.div`
	width: 7px;
	font-weight: 700;
	text-align: center;
	line-height: 20px;
`;

const StockBox = styled.div`
	position: relative;
	width: 112px;
	margin-left: 5px;
	box-sizing: border-box;
	border: 1px solid #b4b4ae;
	background: #dbdad3;
	display: flex;
	align-items: center;
	padding-left: 1px;
	gap: 2px;
	&::after {
		content: '';
		position: absolute;
		right: 2px;
		bottom: 2px;
		border-left: 4px solid transparent;
		border-bottom: 4px solid #aaa;
	}
`;

const NewBadge = styled.div`
	width: 17px;
	height: 16px;
	background: #8f8a2a;
	color: #fff;
	font-weight: 700;
	text-align: center;
	line-height: 16px;
`;

const StockName = styled.div`
	font-weight: 700;
	font-size: 13px;
	letter-spacing: 0.6px;
	color: #111;
`;

const SlashMark = styled.div`
	width: 13px;
	text-align: center;
	color: #777;
	line-height: 20px;
`;

const MoreTab = styled.div`
	position: absolute;
	left: 1403px;
	top: 5px;
	width: 8px;
	height: 20px;
	background: #fff;
	font-size: 10px;
	line-height: 19px;
	text-align: center;
`;

const MainRow = styled.div`
	display: flex;
	align-items: flex-start;
	padding-left: 6px;
`;

const Sidebar = styled.div`
	width: 170px;
	height: 709px;
	margin-right: 7px;
	flex-shrink: 0;
	display: flex;
	flex-direction: column;
	background: #dddcd6;
	border-bottom: 1px solid #fff;
	box-sizing: border-box;
`;

const Tabs = styled.div`
	display: flex;
	height: 25px;
	box-sizing: border-box;
	border-bottom: 1px solid #666;
`;

const Tab = styled.div<{ $active?: boolean }>`
	width: 55px;
	box-sizing: border-box;
	margin-bottom: ${p => (p.$active ? '-1px' : '0')};
	background: ${p => (p.$active ? '#fff' : '#f0f0f0')};
	border: 1px solid ${p => (p.$active ? '#555' : '#cfcfcb')};
	border-bottom: ${p => (p.$active ? '1px solid #fff' : 'none')};
	font-weight: ${p => (p.$active ? 700 : 400)};
	color: ${p => (p.$active ? '#111' : '#444')};
	display: flex;
	align-items: center;
	justify-content: center;
`;

const SearchRow = styled.div`
	display: flex;
	height: 19px;
	padding: 4px 3px 6px;
`;

const SearchInput = styled.div`
	width: 122px;
	margin-right: 0;
	box-sizing: border-box;
	background: #fff;
	border: 1px solid #c4c4c0;
	color: #b4b4b4;
	line-height: 17px;
	padding-left: 4px;
`;

const SectionHead = styled.div`
	height: 25px;
	flex-shrink: 0;
	background: #ebebeb;
	display: flex;
	align-items: center;
	gap: 7px;
	padding-left: 8px;
	color: #333;
`;

const TreeList = styled.div`
	flex: 1;
	background: #fff;
	padding-top: 0;
	border: 1px solid #dddcd6;
	border-width: 0 1px;
`;

const TreeRoot = styled.div`
	position: relative;
	height: 18px;
	line-height: 18px;
	margin-top: 0;
	padding-left: 25px;
	&::before {
		content: '';
		position: absolute;
		left: 10px;
		top: 5px;
		width: 4px;
		height: 5px;
		border-left: 1px solid #444;
		border-bottom: 1px solid #444;
	}
`;

const TreeRow = styled.div`
	height: 18px;
	display: flex;
	align-items: center;
	padding-left: 24px;
`;

const Radio = styled.div<{ $on?: boolean }>`
	position: relative;
	width: 12px;
	height: 12px;
	box-sizing: border-box;
	border-radius: 50%;
	border: 1px solid ${p => (p.$on ? '#777' : '#c4c4c4')};
	background: #fff;
	margin-right: 4px;
	&::after {
		content: '';
		display: ${p => (p.$on ? 'block' : 'none')};
		position: absolute;
		left: 2px;
		top: 2px;
		width: 6px;
		height: 6px;
		border-radius: 50%;
		background: #333;
	}
`;

const TreeLabel = styled.div<{ $on?: boolean }>`
	padding: 0 2px;
	line-height: 16px;
	background: ${p => (p.$on ? '#0078d7' : 'transparent')};
	color: ${p => (p.$on ? '#fff' : '#333')};
	white-space: nowrap;
`;

const Accordion = styled.div`
	flex-shrink: 0;
	background: #ebebeb;
`;

const SideFoot = styled.div`
	height: 28px;
	flex-shrink: 0;
	display: flex;
	align-items: center;
	padding-left: 9px;
	border-top: 1px solid #c8c8c4;
	box-sizing: border-box;
`;

const FootLabel = styled.div`
	flex: 1;
	color: #444;
`;

const FootBtn = styled.div`
	width: 38px;
	height: 20px;
	box-sizing: border-box;
	margin-right: 3px;
	border: 1px solid #b8b8b2;
	background: #e8e8e2;
	color: #a0a098;
	text-align: center;
	line-height: 18px;
`;

const ChartColumn = styled.div`
	width: 1200px;
	flex-shrink: 0;
	display: flex;
	flex-direction: column;
`;

const InfoRow = styled.div`
	height: 22px;
	box-sizing: border-box;
	display: flex;
	background: #fff;
	border-bottom: 1px solid #c4c4c0;
	border-top: 1px solid #c8c8c4;
`;

const PriceStrip = styled.div`
	width: 306px;
	background: #f1d9d9;
	display: flex;
	align-items: center;
`;

const Val = styled.div<{ $w: number; $color: string; $pad: number }>`
	width: ${p => p.$w}px;
	box-sizing: border-box;
	padding-left: ${p => p.$pad}px;
	color: ${p => p.$color};
	font-family: ${MONO};
	font-weight: 700;
	font-size: 12px;
	line-height: 20px;
	white-space: nowrap;
`;

const InfoKey = styled.div<{ $w: number }>`
	width: ${p => p.$w}px;
	background: #eeeeee;
	text-align: center;
	line-height: 20px;
	color: #333;
`;

const InfoVal = styled.div<{ $w: number }>`
	width: ${p => p.$w}px;
	color: ${RED};
	text-align: center;
	line-height: 20px;
`;

const InfoRight = styled.div`
	margin-left: auto;
	display: flex;
	align-items: center;
	padding-right: 8px;
	gap: 2px;
`;

const PeriodText = styled.div`
	margin-right: 4px;
	color: #444;
	letter-spacing: 0.8px;
`;

const GearBox = styled.div`
	width: 20px;
	height: 18px;
	box-sizing: border-box;
	border: 1px solid #bbb;
	background: #f4f4f4;
	display: flex;
	align-items: center;
	justify-content: center;
`;

const TradeBtn = styled.div<{ $color: string }>`
	width: 30px;
	height: 18px;
	box-sizing: border-box;
	border: 1px solid ${p => p.$color};
	color: ${p => p.$color};
	background: #fff;
	text-align: center;
	line-height: 16px;
`;

const MiniStack = styled.div`
	display: flex;
	flex-direction: column;
	gap: 1px;
`;

const MiniBtn = styled.div`
	width: 9px;
	height: 9px;
	font-size: 9px;
	line-height: 8px;
	text-align: center;
	background: #e8e8e8;
	border: 0 solid #888;
`;

const ChartPane = styled.div<{ $divider?: boolean }>`
	position: relative;
	background: #fff;
	border-top: ${p => (p.$divider ? '1px solid #888' : 'none')};
`;

const ChartSvg = styled.svg`
	display: block;
`;

const ChartText = styled.text`
	font-family: ${KR};
`;

const IconNote = styled.text`
	font-family: ${KR};
	font-size: 6px;
	font-weight: 700;
	fill: #333;
	stroke: none;
`;

const Legend = styled.div`
	position: absolute;
	left: 5px;
	top: 3px;
	display: flex;
	gap: 6px;
	line-height: 14px;
`;

const LegendItem = styled.div<{ $mark: string; $color?: string; $bold?: boolean }>`
	display: flex;
	align-items: center;
	gap: 3px;
	color: ${p => p.$color || '#111'};
	font-weight: ${p => (p.$bold ? 700 : 400)};
	font-size: ${p => (p.$bold ? 13 : 12)}px;
	word-spacing: 4px;
	white-space: nowrap;
	&::before {
		content: '';
		width: 3px;
		height: 8px;
		background: ${p => p.$mark};
	}
`;

const PaneKeys = styled.div`
	position: absolute;
	left: 1128px;
	top: 0;
	display: flex;
`;

const PaneKey = styled.div`
	width: 9px;
	height: 9px;
	box-sizing: content-box;
	border: 1px solid #000;
	margin-right: -1px;
	background: #fff;
	font-size: 8px;
	font-weight: 700;
	line-height: 9px;
	text-align: center;
	font-family: ${MONO};
`;

const PaneGap = styled.div<{ $wide?: boolean }>`
	width: ${p => (p.$wide ? 28 : 27)}px;
`;

const ControlBar = styled.div`
	height: 15px;
	display: flex;
	background: #fff;
`;

const ScrollBtn = styled.div`
	width: 16px;
	box-sizing: border-box;
	background: #f0f0f0;
	border: 1px solid #aaa;
	border-right-color: #777;
	border-bottom-color: #777;
	font-size: 10px;
	line-height: 12px;
	text-align: center;
	color: #111;
`;

const ScrollTrack = styled.div`
	width: 816px;
	background: repeating-conic-gradient(#e4e4e4 0 25%, #fff 0 50%) 0 0 / 2px 2px;
`;

const ScrollThumb = styled.div`
	width: 49px;
	box-sizing: border-box;
	background: #ebebeb;
	border: 1px solid #bbb;
`;

const PlayRow = styled.div`
	flex: 1;
	display: flex;
	align-items: center;
	padding-left: 3px;
	background: #fff;
`;

const CtrlBtn = styled.div<{ $on?: boolean }>`
	width: 16px;
	height: 15px;
	display: flex;
	align-items: center;
	justify-content: center;
	background: ${p => (p.$on ? '#e8e8e8' : 'transparent')};
`;

const SliderBox = styled.div`
	width: 69px;
	padding-left: 4px;
	height: 15px;
	box-sizing: border-box;
`;

const SideTools = styled.div`
	width: 26px;
	margin-left: 1px;
	margin-top: -1px;
	box-sizing: border-box;
	background: #f6f6f6;
	border: 1px solid #d4d4d0;
	padding: 3px 0 1px;
	display: flex;
	flex-direction: column;
	align-items: center;
	flex-shrink: 0;
`;

const ToolBtn = styled.div<{ $rule?: boolean; $boxed?: boolean }>`
	width: 24px;
	height: 20px;
	margin-bottom: 2px;
	display: flex;
	align-items: center;
	justify-content: center;
	border-bottom: ${p => (p.$rule ? '1px solid #d4d4d0' : 'none')};
	box-sizing: border-box;
	& > svg {
		${p => (p.$boxed ? 'outline: 1px solid #bbb; outline-offset: 1px; border-radius: 3px;' : '')}
	}
`;
